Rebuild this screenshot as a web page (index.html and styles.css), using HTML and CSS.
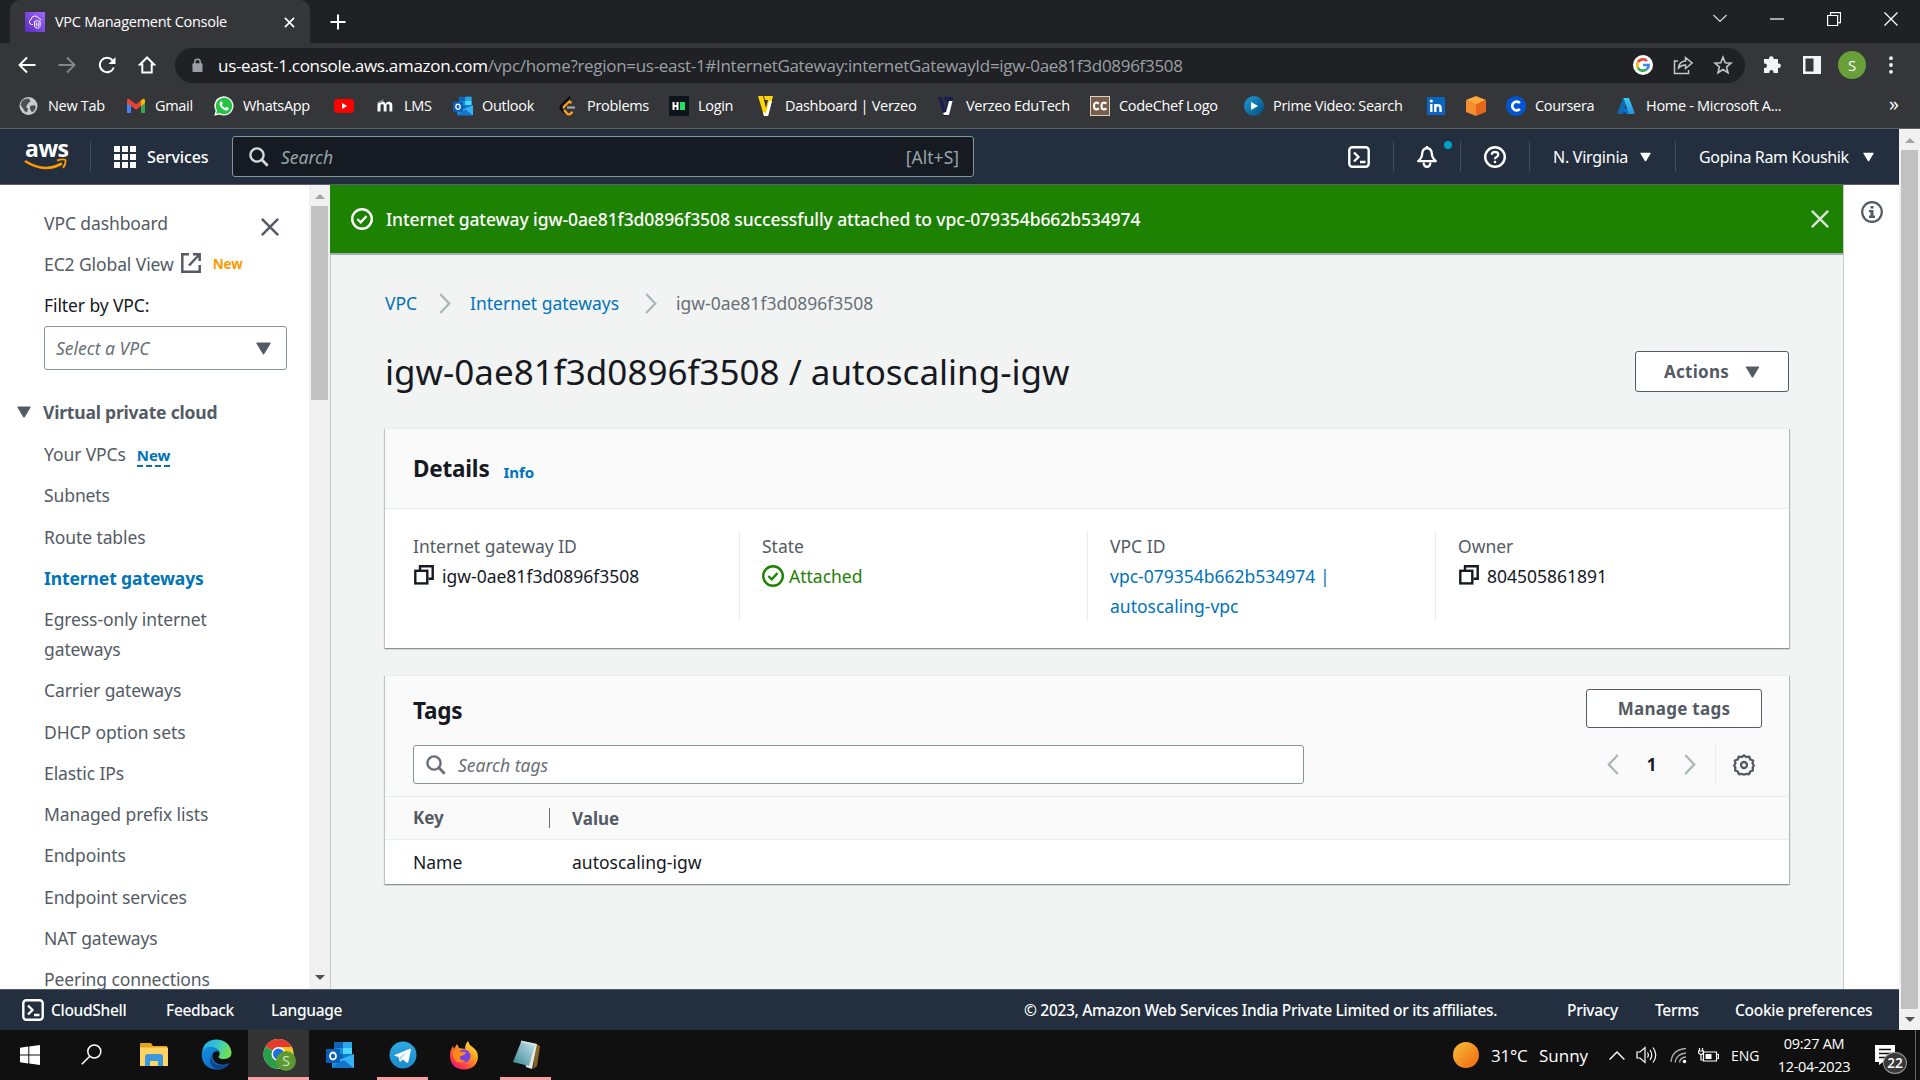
FILE: index.html
```html
<!DOCTYPE html>
<html lang="en">
<head>
<meta charset="utf-8">
<title>VPC Management Console</title>
<link rel="stylesheet" href="styles.css">
</head>
<body>
<svg class="defs" width="0" height="0">
  <defs>
    <linearGradient id="purple" x1="0" y1="1" x2="1" y2="0"><stop offset="0" stop-color="#5a2bc0"/><stop offset="1" stop-color="#a166ff"/></linearGradient>
    <linearGradient id="prime" x1="0" y1="0" x2="1" y2="1"><stop offset="0" stop-color="#1b9ddb"/><stop offset="1" stop-color="#064a78"/></linearGradient>
    <linearGradient id="azure" x1="0" y1="0" x2="0" y2="1"><stop offset="0" stop-color="#3ccbf4"/><stop offset="1" stop-color="#2892df"/></linearGradient>
    <linearGradient id="sun" x1="0" y1="0" x2="1" y2="1"><stop offset="0" stop-color="#f5c23a"/><stop offset="1" stop-color="#f2640f"/></linearGradient>
    <linearGradient id="edgeA" x1="0" y1="0" x2="1" y2="0.3"><stop offset="0" stop-color="#2aa8e8"/><stop offset="0.5" stop-color="#2ec3d8"/><stop offset="1" stop-color="#6fe05a"/></linearGradient>
    <linearGradient id="edgeB" x1="0" y1="0" x2="1" y2="1"><stop offset="0" stop-color="#1591e0"/><stop offset="1" stop-color="#0a5cb8"/></linearGradient>
    <linearGradient id="tele" x1="0" y1="0" x2="0" y2="1"><stop offset="0" stop-color="#2fa8e2"/><stop offset="1" stop-color="#1a8ccc"/></linearGradient>
    <linearGradient id="fox" x1="1" y1="0" x2="0.2" y2="1"><stop offset="0" stop-color="#fff04a"/><stop offset="0.45" stop-color="#ff9a1e"/><stop offset="0.8" stop-color="#ff3b48"/><stop offset="1" stop-color="#e31587"/></linearGradient>
    <linearGradient id="note" x1="0" y1="1" x2="1" y2="0"><stop offset="0" stop-color="#3b8795"/><stop offset="1" stop-color="#c3e4ec"/></linearGradient>
    <symbol id="i-close" viewBox="0 0 16 16"><path d="M1.5 1.5l13 13M14.5 1.5l-13 13" fill="none" stroke="currentColor" stroke-width="2"/></symbol>
    <symbol id="i-caret" viewBox="0 0 14 12"><path d="M1 0.5h12q1 0 .5 1L7.8 11q-.8 1-1.6 0L.5 1.500q-.5-1 .5-1z" fill="currentColor"/></symbol>
    <symbol id="i-search" viewBox="0 0 20 20"><circle cx="8" cy="8" r="6.6" fill="none" stroke="currentColor" stroke-width="2.4"/><path d="M12.600 12.600L18.700 18.700" stroke="currentColor" stroke-width="2.800"/></symbol>
    <symbol id="i-shell" viewBox="0 0 22 22"><rect x="1.300" y="1.300" width="19.400" height="19.400" rx="3" fill="none" stroke="currentColor" stroke-width="2.400"/><path d="M6 6.500l4.500 4.500L6 15.500M12 16h5.500" fill="none" stroke="currentColor" stroke-width="2.300"/></symbol>
    <symbol id="i-check" viewBox="0 0 22 22"><circle cx="11" cy="11" r="9.800" fill="none" stroke="currentColor" stroke-width="2.400"/><path d="M6.300 11l3.400 3.300 5.800-6.200" fill="none" stroke="currentColor" stroke-width="2.300"/></symbol>
    <symbol id="i-copy" viewBox="0 0 20 20"><path d="M6 5.500V1.300h12.700v12.400H14.500" fill="none" stroke="currentColor" stroke-width="2.400"/><rect x="1.300" y="5.800" width="12" height="12.600" fill="none" stroke="currentColor" stroke-width="2.400"/></symbol>
    <symbol id="i-right" viewBox="0 0 12 21"><path d="M1.200 1l9 9.500-9 9.500" fill="none" stroke="currentColor" stroke-width="2.300"/></symbol>
    <symbol id="i-left" viewBox="0 0 12 21"><path d="M10.800 1l-9 9.500 9 9.500" fill="none" stroke="currentColor" stroke-width="2.300"/></symbol>
    <symbol id="i-outlook" viewBox="0 0 28 28"><rect x="8" y="1" width="18" height="18" rx="1" fill="#1066b5"/><path d="M9 7h8v6H9z" fill="#1490df"/><path d="M17 1h9v6h-9z" fill="#28a8ea"/><path d="M17 7h9v6h-9z" fill="#50d9ff"/><path d="M17 13h9v6h-9z" fill="#0f7ad0"/><path d="M6 13l11 7 11-7v13q0 1-1 1H7q-1 0-1-1z" fill="#1e8fe0"/><path d="M28 13v14L13 19z" fill="#35b2f5"/><path d="M6 26.500L18 19l9.500 8H7z" fill="#1476c9"/><rect x="0" y="8" width="14" height="14" rx="1" fill="#0a5fb8"/><ellipse cx="7" cy="15" rx="3" ry="3.500" fill="none" stroke="#fff" stroke-width="1.800"/></symbol>
  </defs>
</svg>

<div class="screen">
  <div class="tabstrip">
    <div class="tab">
      <svg class="favicon" viewBox="0 0 20 20"><rect width="20" height="20" fill="url(#purple)"/><g fill="none" stroke="#fff" stroke-width="1"><path d="M8 12.500H6.500a2.600 2.600 0 0 1-.4-5 4 4 0 0 1 7.600-1.200q1.800.3 2.300 2"/><path d="M9.500 9.500q2.800-1.800 5.600 0v5q-2.800 3.500-5.600 0zM11.300 10.500v4M13.300 10.500v4"/></g></svg>
      <span class="tab-title">VPC Management Console</span>
      <svg class="tab-close" viewBox="0 0 12 12"><path d="M1 1l10 10M11 1L1 11" stroke="#fff" stroke-width="1.800"/></svg>
    </div>
    <svg class="new-tab" viewBox="0 0 16 16"><path d="M8 .5v15M.5 8h15" stroke="#fff" stroke-width="2"/></svg>
    <div class="window-buttons">
      <svg width="14" height="9" viewBox="0 0 14 9"><path d="M.5 1L7 7.500 13.500 1" fill="none" stroke="#ddd" stroke-width="1.200"/></svg>
      <svg width="14" height="14" viewBox="0 0 14 14"><path d="M0 7h14" stroke="#fff" stroke-width="1.200"/></svg>
      <svg width="14" height="14" viewBox="0 0 14 14"><path d="M.6 3.500h10v10H.6zM3.500 3V.6h10v10H11" fill="none" stroke="#fff" stroke-width="1.200"/></svg>
      <svg width="14" height="14" viewBox="0 0 14 14"><path d="M.5 .5l13 13M13.500 .5l-13 13" stroke="#fff" stroke-width="1.300"/></svg>
    </div>
  </div>

  <div class="toolbar">
    <div class="nav-buttons">
      <svg viewBox="0 0 18 18"><path d="M17.500 9H2M9 1.500L1.500 9 9 16.500" fill="none" stroke="#fff" stroke-width="1.900"/></svg>
      <svg class="dim" viewBox="0 0 18 18"><path d="M.5 9H16M9 1.500L16.500 9 9 16.500" fill="none" stroke="#85868a" stroke-width="1.900"/></svg>
      <svg viewBox="0 0 18 18"><path d="M15.800 11.500A7.200 7.200 0 1 1 14.500 4.300" fill="none" stroke="#fff" stroke-width="2"/><path d="M17.500 1v7h-7z" fill="#fff"/></svg>
      <svg viewBox="0 0 18 18"><path d="M9 1.500L2 8.500h2.300V16.500h9.400V8.500H16z" fill="none" stroke="#fff" stroke-width="2"/></svg>
    </div>
    <div class="omnibox">
      <svg class="lock" viewBox="0 0 12 15"><rect x="0.500" y="5" width="11" height="9.500" rx="1" fill="#9aa0a6"/><path d="M3 6V3.600a3 3 0 0 1 6 0V6" fill="none" stroke="#9aa0a6" stroke-width="1.600"/></svg>
      <span class="url"><span class="host">us-east-1.console.aws.amazon.com</span>/vpc/home?region=us-east-1#InternetGateway:internetGatewayId=igw-0ae81f3d0896f3508</span>
      <div class="omni-icons">
        <svg viewBox="0 0 20 20"><circle cx="10" cy="10" r="10" fill="#fff"/><g fill="none" stroke-width="2.600"><path d="M5 7.200a5.700 5.700 0 0 1 9-1.200" stroke="#ea4335"/><path d="M5 7.200a5.700 5.700 0 0 0 0 5.600" stroke="#fbbc05"/><path d="M5 12.800a5.700 5.700 0 0 0 8.700 1.500" stroke="#34a853"/><path d="M10 10h5.700q0 2.700-2 4.300" stroke="#4285f4"/></g></svg>
        <svg viewBox="0 0 20 20"><g fill="none" stroke="#c4c7c9" stroke-width="1.500"><path d="M5 6H1.500v12.500h14V15"/><path d="M5.500 13q.5-6.500 7-7V2.500L19 8l-6.500 5.500V10q-4.500 0-7 3z"/></g></svg>
        <svg viewBox="0 0 20 20"><path d="M10 2.200l2.200 5.500 5.900.4-4.500 3.800 1.400 5.800-5-3.200-5 3.200 1.400-5.800-4.500-3.800 5.900-.4z" fill="none" stroke="#c4c7c9" stroke-width="1.600"/></svg>
      </div>
    </div>
    <div class="ext-icons">
      <svg width="20" height="20" viewBox="0 0 20 20"><path d="M7 3.500a2.300 2.300 0 0 1 4.600 0V4H16v4.500h.6a2.300 2.300 0 0 1 0 4.600H16V18h-4.500v-.8a2.100 2.100 0 0 0-4.200 0v.8H2v-5h.8a2.200 2.200 0 0 0 0-4.400H2V4h5z" fill="#f1f3f4"/></svg>
      <svg width="18" height="18" viewBox="0 0 18 18"><path d="M0 0h18v18H0zM2.500 2.500v13h8v-13z" fill="#f1f3f4" fill-rule="evenodd"/></svg>
      <span class="avatar">S</span>
      <svg width="4" height="18" viewBox="0 0 4 18"><g fill="#f1f3f4"><circle cx="2" cy="2.200" r="1.900"/><circle cx="2" cy="9" r="1.900"/><circle cx="2" cy="15.800" r="1.900"/></g></svg>
    </div>
  </div>

  <div class="bookmarks">
    <div class="bm"><svg viewBox="0 0 20 20"><circle cx="9.500" cy="10" r="9" fill="#c9cbce"/><path d="M4 4q3-2 6-1.500l1.500 2.500-3 3-1.500 3 2 1.500-1 4q-3-1-4-4L1.500 9Q2 6 4 4zM11 10l4-1 2 2q-1 4-4 5.500L11 13z" fill="#4c4f53"/></svg><span>New Tab</span></div>
    <div class="bm"><svg viewBox="0 0 20 20"><path d="M1 17V4.500l4 3V17z" fill="#4285f4"/><path d="M15 17V7.500l4-3V17z" fill="#34a853"/><path d="M15 4.200L17 3q2-.6 2 1.500V7l-4 3z" fill="#fbbc04"/><path d="M1 7V4.500Q1 2.400 3 3l7 5.300L15 4.200V10l-5 3.800L5 10z" fill="#ea4335"/></svg><span>Gmail</span></div>
    <div class="bm"><svg viewBox="0 0 20 20"><path d="M.3 19.700l1.300-5A9.600 9.600 0 1 1 5.500 18.400z" fill="#fff"/><path d="M2.200 17.800l.9-3.400A8.200 8.200 0 1 1 5.800 17z" fill="#25c244"/><path d="M6.300 5.500l1.400-.2 1.100 2.500-.9 1.300q1 2 3.200 3l1.200-1.300 2.400 1.200-.2 1.400q-1.200 1.400-3 1Q7 13 5.600 8.800q-.3-2 .7-3.300z" fill="#fff"/></svg><span>WhatsApp</span></div>
    <div class="bm"><svg viewBox="0 0 20 20"><rect y="3" width="20" height="14" rx="3.500" fill="#f00"/><path d="M8 7l5.200 3L8 13z" fill="#fff"/></svg></div>
    <div class="bm"><svg viewBox="0 0 20 20"><path d="M2.500 15.500V9q0-3 3.200-2.500Q9 4 10.500 8q1-3 4-2.200 3 .6 2.800 3.500v6.200h-2.800V9.500q0-1.600-1.500-1.600t-1.500 1.600v6H8.700v-6q0-1.600-1.500-1.600T5.500 9.500v6z" fill="#fff"/><path d="M1 7l8-4-2 3.500z" fill="#8d9096"/></svg><span>LMS</span></div>
    <div class="bm"><svg viewBox="0 0 28 28"><use href="#i-outlook"/></svg><span>Outlook</span></div>
    <div class="bm"><svg viewBox="0 0 20 20"><path d="M12 1L3.500 9.500q-2 2 0 4l3 3" fill="none" stroke="#0b0b0b" stroke-width="2.300"/><path d="M13.500 7l-2-1.500L6.500 10q-1 1 0 2M6 14l3.500 4q1.500 1 3.500-.5l1.500-1.700" fill="none" stroke="#ffa116" stroke-width="2.300"/><path d="M9 11.500h8" stroke="#a7a7a7" stroke-width="2.200"/></svg><span>Problems</span></div>
    <div class="bm"><svg viewBox="0 0 20 20"><rect width="20" height="20" fill="#0e141e"/><path d="M4.500 6v8M8.500 6v8M4.500 10h4" stroke="#fff" stroke-width="2"/><rect x="11" y="6" width="5" height="8" fill="#1be361"/></svg><span>Login</span></div>
    <div class="bm"><svg viewBox="0 0 20 20"><path d="M2 0h5l3 12 2-8H9L8 0h9l-5 20H8z" fill="#ffd500"/><path d="M13 5h3l-4 15H8l-1-4 3 1z" fill="#fff"/></svg><span>Dashboard | Verzeo</span></div>
    <div class="bm"><svg viewBox="0 0 20 20"><path d="M1 1h4l3 12 2-8H8L7 1h9l-4 19H7z" fill="#191d51"/><path d="M12 5h3.500L12 19H7l-1-2 3-1z" fill="#fff"/></svg><span>Verzeo EduTech</span></div>
    <div class="bm"><svg viewBox="0 0 20 20"><rect x="0.500" y="0.500" width="19" height="19" fill="#7b5e4a" stroke="#d9cfc4"/><path d="M9 7.500Q4 5 4 10t5 2.500M16.500 7.500q-5-2.500-5 2.500t5 2.500" fill="none" stroke="#fff" stroke-width="2.200"/></svg><span>CodeChef Logo</span></div>
    <div class="bm"><svg viewBox="0 0 20 20"><circle cx="10" cy="10" r="10" fill="url(#prime)"/><path d="M7 6l7 4-7 4z" fill="#fff"/></svg><span>Prime Video: Search</span></div>
    <div class="bm"><svg viewBox="0 0 20 20"><rect x="0" y="1" width="18" height="18" rx="1" fill="#0a66c2"/><path d="M4.300 8v8M8.300 8v8M8.300 11.500q.4-2.300 2.700-2.200 2.500 0 2.500 2.700v4" fill="none" stroke="#fff" stroke-width="2.400"/><circle cx="4.300" cy="5" r="1.600" fill="#fff"/></svg></div>
    <div class="bm"><svg viewBox="0 0 20 20"><path d="M10 0l10 4-10 5L0 4z" fill="#ffa63e"/><path d="M0 4l10 4.500V20L0 16z" fill="#f68d2e"/><path d="M20 4L10 8.500V20l10-4z" fill="#e8651c"/></svg></div>
    <div class="bm"><svg viewBox="0 0 20 20"><circle cx="10" cy="10" r="10" fill="#0056d2"/><path d="M13.800 7.200a4.300 4.300 0 1 0 0 5.600" fill="none" stroke="#fff" stroke-width="2.700"/></svg><span>Coursera</span></div>
    <div class="bm"><svg viewBox="0 0 20 20"><path d="M6 2h5L6 18H1q-1 0-.6-1.300z" fill="#1468b0"/><path d="M3 12.500h9l3 5.500h-5z" fill="#0078d4"/><path d="M6.500 2h5.500l5.500 14.500q.4 1.500-1 1.500H12z" fill="url(#azure)"/></svg><span>Home - Microsoft A...</span></div>
    <div class="more">»</div>
  </div>

  <div class="viewport">
    <div class="page">
      <header class="aws-header">
        <div class="logo"><span class="logo-text">aws</span><svg viewBox="0 0 43 14"><path d="M1 3q19 12.500 37 2.500" fill="none" stroke="#f90" stroke-width="2.600"/><path d="M33 2.500q6-2 8.500-.5.500 4-2.500 8" fill="none" stroke="#f90" stroke-width="1.900"/></svg></div>
        <i class="hdiv"></i>
        <div class="services"><svg viewBox="0 0 22 22" fill="#fff"><path d="M0 0h6v6H0zM8 0h6v6H8zM16 0h6v6h-6zM0 8h6v6H0zM8 8h6v6H8zM16 8h6v6h-6zM0 16h6v6H0zM8 16h6v6H8zM16 16h6v6h-6z"/></svg><span>Services</span></div>
        <div class="global-search"><svg><use href="#i-search"/></svg><em>Search</em><span>[Alt+S]</span></div>
        <div class="hcell shell"><svg><use href="#i-shell"/></svg></div>
        <div class="hcell bell"><svg viewBox="0 0 22 22"><path d="M11 2q-4.500.5-4.800 5.500-.2 4.500-4 7.700h17.600q-3.800-3.200-4-7.700Q15.500 2.500 11 2z" fill="none" stroke="#fff" stroke-width="2.300" stroke-linejoin="round"/><path d="M7.500 16.500q.5 4.300 3.500 4.300t3.500-4.300" fill="none" stroke="#fff" stroke-width="2.200"/><path d="M11 0v3" stroke="#fff" stroke-width="2.200"/></svg><i class="dot"></i></div>
        <div class="hcell help"><svg viewBox="0 0 22 22"><circle cx="11" cy="11" r="9.800" fill="none" stroke="#fff" stroke-width="2.400"/><path d="M7.700 8.800q.2-3 3.300-3 3.300.1 3.300 2.800 0 1.500-1.800 2.400-1.500.7-1.500 2.200" fill="none" stroke="#fff" stroke-width="2.200"/><path d="M11 14.800v2.300" stroke="#fff" stroke-width="2.300"/></svg></div>
        <div class="hcell region"><span>N. Virginia</span><svg><use href="#i-caret"/></svg></div>
        <div class="hcell account"><span>Gopina Ram Koushik</span><svg><use href="#i-caret"/></svg></div>
      </header>

      <div class="body-row">
        <nav class="sidebar">
          <svg class="nav-close"><use href="#i-close"/></svg>
          <a>VPC dashboard</a>
          <a class="global-view"><span>EC2 Global View</span><svg viewBox="0 0 20 20"><path d="M8 1.300H1.300v17.400h17.400V12M12 1.300h6.700V8M18 2L8 12.500" fill="none" stroke="currentColor" stroke-width="2.500"/></svg><b>New</b></a>
          <a class="filter">Filter by VPC:</a>
          <div class="select"><em>Select a VPC</em><svg><use href="#i-caret"/></svg></div>
          <h3><svg><use href="#i-caret"/></svg>Virtual private cloud</h3>
          <a class="your">Your VPCs<b>New</b></a>
          <a>Subnets</a>
          <a>Route tables</a>
          <a class="current">Internet gateways</a>
          <a>Egress-only internet<br>gateways</a>
          <a>Carrier gateways</a>
          <a>DHCP option sets</a>
          <a>Elastic IPs</a>
          <a>Managed prefix lists</a>
          <a>Endpoints</a>
          <a>Endpoint services</a>
          <a>NAT gateways</a>
          <a>Peering connections</a>
        </nav>
        <div class="scrollbar side-scroll"><i class="up"></i><i class="thumb"></i><i class="down"></i></div>

        <main class="main">
          <div class="flash"><svg class="flash-ok"><use href="#i-check"/></svg><span>Internet gateway igw-0ae81f3d0896f3508 successfully attached to vpc-079354b662b534974</span><svg class="flash-x"><use href="#i-close"/></svg></div>
          <div class="content">
            <div class="crumbs"><a class="c1">VPC</a><svg><use href="#i-right"/></svg><a class="c2">Internet gateways</a><svg><use href="#i-right"/></svg><span>igw-0ae81f3d0896f3508</span></div>
            <div class="title-row"><h1>igw-0ae81f3d0896f3508 / autoscaling-igw</h1><button class="btn actions">Actions<svg><use href="#i-caret"/></svg></button></div>

            <section class="card details">
              <div class="card-head"><h2>Details</h2><b>Info</b></div>
              <div class="cols">
                <div class="col"><label>Internet gateway ID</label><p><svg class="copy"><use href="#i-copy"/></svg>igw-0ae81f3d0896f3508</p></div>
                <div class="col"><label>State</label><p class="ok"><svg><use href="#i-check"/></svg>Attached</p></div>
                <div class="col"><label>VPC ID</label><p class="link">vpc-079354b662b534974 |<br>autoscaling-vpc</p></div>
                <div class="col"><label>Owner</label><p class="num"><svg class="copy"><use href="#i-copy"/></svg>804505861891</p></div>
              </div>
            </section>

            <section class="card tags">
              <div class="tags-top"><h2>Tags</h2><button class="btn">Manage tags</button></div>
              <div class="tags-tools">
                <div class="tag-search"><svg><use href="#i-search"/></svg><em>Search tags</em></div>
                <div class="pager"><svg><use href="#i-left"/></svg><b>1</b><svg><use href="#i-right"/></svg></div>
                <div class="gear"><svg viewBox="0 0 22 22"><path d="M11 1.300l2.300 1.900 3-.5 1 2.800 2.800 1-.5 3 1.200 2-1.200 2.200.3 2.800-2.700 1-1.100 2.700-2.900-.4L11 20.700l-2.200-.9-2.900.4-1.100-2.700-2.700-1 .3-2.800L1.200 11.500l1.200-2-.5-3 2.800-1 1-2.800 3 .5z" fill="none" stroke="currentColor" stroke-width="2.300" stroke-linejoin="round"/><circle cx="11" cy="11" r="3" fill="none" stroke="currentColor" stroke-width="2.300"/></svg></div>
              </div>
              <div class="trow thead"><span>Key</span><span>Value</span></div>
              <div class="trow"><span>Name</span><span>autoscaling-igw</span></div>
            </section>
          </div>
        </main>
        <aside class="info-panel"><svg viewBox="0 0 22 22"><circle cx="11" cy="11" r="9.800" fill="none" stroke="currentColor" stroke-width="2.200"/><path d="M9.500 5h3v2.600h-3zM8 9h4.500v5.500H14V17H8v-2.500h1.500V11.300H8z" fill="currentColor"/></svg></aside>
      </div>

      <footer class="aws-footer">
        <svg><use href="#i-shell"/></svg>
        <span class="f-shell">CloudShell</span><span class="f-feed">Feedback</span><span class="f-lang">Language</span>
        <span class="f-copy">© 2023, Amazon Web Services India Private Limited or its affiliates.</span><span class="f-priv">Privacy</span><span class="f-terms">Terms</span><span class="f-cook">Cookie preferences</span>
      </footer>
    </div>
    <div class="scrollbar page-scroll"><i class="up"></i><i class="thumb"></i><i class="down"></i></div>
  </div>

  <div class="taskbar">
    <div class="task"><svg width="20" height="20" viewBox="0 0 20 20" fill="#fff"><path d="M0 2.800L8.300 1.600V9.600H0zM9.300 1.400L20 0v9.600H9.300zM0 10.500h8.300v8L0 17.300zM9.300 10.500H20V20L9.300 18.600z"/></svg></div>
    <div class="task"><svg width="21" height="21" viewBox="0 0 21 21"><circle cx="13.300" cy="7.500" r="6.500" fill="none" stroke="#fff" stroke-width="1.500"/><path d="M9 12L.8 20.300" stroke="#fff" stroke-width="1.500"/></svg></div>
    <div class="task"><svg width="29" height="24" viewBox="0 0 29 24"><path d="M0 1q0-1 1-1h10l2 3h14v4H0z" fill="#e6a21a"/><path d="M0 4.500h28V23H0z" fill="#ffd362"/><path d="M5 23v-9q0-3 3-3h12q3 0 3 3v9h-5v-5h-8v5z" fill="#3a98e0"/></svg></div>
    <div class="task"><svg width="31" height="31" viewBox="0 0 31 31"><path d="M1 14Q2 1 15.500.5 28 1 30.500 13q.5 7-7.500 7-5 0-5.500-2 3-5-1.500-8Q9 6 1 14z" fill="url(#edgeA)"/><path d="M.6 15Q2 8 9.500 7.700q6 0 8.500 5-5-1.500-6.500 3-.5 5 3.500 8.300 7 3.500 13.500 0-5 7.500-14 6.500Q1 29 .6 15z" fill="url(#edgeB)"/><path d="M11 15q-2 6 3 9.700 7 4 14 0 1-.5.300.6Q22 32.500 14 29.500 6 24 11 15z" fill="#12418d"/></svg></div>
    <div class="task active"><svg width="34" height="32" viewBox="0 0 34 32"><circle cx="15.500" cy="15" r="15" fill="#fff"/><path d="M15.500 15L2.500 7.500A15 15 0 0 1 28.500 7.500z" fill="#e33b2e"/><path d="M15.500 15L2.500 7.500A15 15 0 0 0 15.500 30l6-12z" fill="#2a9f4b"/><path d="M15.500 8h13A15 15 0 0 1 15.500 30l6.500-11z" fill="#fcc31e"/><circle cx="15.500" cy="15" r="7" fill="#fff"/><circle cx="15.500" cy="15" r="5.500" fill="#1f6fe5"/><circle cx="23" cy="22" r="10" fill="#5b9a32"/><text x="23" y="27" text-anchor="middle" class="chrome-s">S</text></svg></div>
    <div class="task"><svg width="30" height="28" viewBox="0 0 28 28"><use href="#i-outlook"/></svg></div>
    <div class="task open"><svg width="28" height="28" viewBox="0 0 28 28"><circle cx="14" cy="14" r="13.500" fill="url(#tele)"/><path d="M5.500 14L21 7.700q1.200-.3.900 1.300l-2.600 12q-.4 1.300-1.700.5l-4-3-2 2q-1 .7-1.200-.5l-.9-4-3.800-1.200q-1-.5-.2-.8z" fill="#fff"/><path d="M10.500 16l7.500-5-5.500 6-1.500 3z" fill="#aed5ea"/></svg></div>
    <div class="task"><svg width="30" height="30" viewBox="0 0 30 30"><path d="M19 1q1 4 4.500 6 5.500 4 5.500 10-1 12-14 12.500Q2 29 1 16.500 1 10 4 6l1 3 3-5 2 4 6 1q0-5 3-8z" fill="url(#fox)"/><circle cx="15" cy="16" r="6.500" fill="#7542e5"/><path d="M4 11q5-2 7 1 5-1 6 1-2 3-6 3.500-1 4 6 4.500-8 4-12-2Q3 15 4 11z" fill="#ff8a1c"/></svg></div>
    <div class="task open"><svg width="28" height="30" viewBox="0 0 28 30"><path d="M24 4l4 2-3 20-4 3z" fill="#8a6424"/><path d="M10 1L25 4l-5 25-6-2z" fill="#e8e9e4"/><path d="M9 2l14 3-6 21L1 22z" fill="url(#note)"/><path d="M9 1.500L23 4.500" stroke="#dfe5e6" stroke-width="2" stroke-dasharray="1.500 1"/></svg></div>
    <div class="tray">
      <svg class="sun" viewBox="0 0 26 26"><circle cx="13" cy="13" r="13" fill="url(#sun)"/></svg>
      <span class="temp">31°C</span><span class="sky">Sunny</span>
      <svg class="t-up" viewBox="0 0 16 9"><path d="M.6 8.400L8 1l7.400 7.400" fill="none" stroke="#fff" stroke-width="1.400"/></svg>
      <svg class="t-vol" viewBox="0 0 21 18"><g fill="none" stroke="#fff" stroke-width="1.200"><path d="M1 6h3l5-4.500v15L4 12H1z"/><path d="M11.500 6.500q1.700 2.500 0 5M14 4q3.500 5 0 10M17 1.500q5.500 7.500 0 15"/></g></svg>
      <svg class="t-net" viewBox="0 0 17 17"><g fill="none" stroke="#aaa" stroke-width="1.300"><path d="M1 15Q2 2.500 16 1.500M5 15.500Q6 7 16 6M9.500 15.500q.5-5 6.500-5.500"/></g><circle cx="14.500" cy="14.500" r="1.800" fill="#fff"/></svg>
      <svg class="t-bat" viewBox="0 0 21 15"><path d="M5.500 4h13v9h-13zM19 6.500h1.500v4H19" fill="none" stroke="#fff" stroke-width="1.200"/><path d="M7.500 6h6v5h-6z" fill="#fff"/><path d="M1.500 0v3M4.500 0v3M.5 3h5v2L3 7 .5 5zM3 7v5h2" fill="none" stroke="#fff" stroke-width="1.200"/></svg>
      <span class="lang">ENG</span>
      <div class="clock"><span>09:27 AM</span><span class="date">12-04-2023</span></div>
      <div class="notif"><svg viewBox="0 0 20 20"><path d="M0 0h20v17H8l-4 3v-3H0z" fill="#fff"/><path d="M4 4.500h12M4 8.500h12M4 12.500h8" stroke="#111" stroke-width="1.300"/></svg><i class="badge">22</i></div>
      <i class="peek"></i>
    </div>
  </div>
</div>
</body>
</html>
```
FILE: styles.css
```css
* { box-sizing: border-box; }
body { margin: 0; width: 1920px; height: 1080px; overflow: hidden; background: #202124; font-family: "Noto Sans", "Open Sans", sans-serif; }
h1, h2, h3, p { margin: 0; }
i { display: block; font-style: normal; }
svg { display: block; flex: none; }
span, a, em, b, label { white-space: nowrap; }
.defs { position: absolute; }
.screen { display: flex; flex-direction: column; width: 1920px; height: 1080px; }

/* browser chrome */
.tabstrip { display: flex; align-items: center; height: 43px; background: #202124; color: #fff; font-family: "Open Sans", sans-serif; }
.tab { display: flex; align-items: center; width: 300px; height: 43px; margin-left: 10px; padding-left: 15px; background: #35363a; border-radius: 10px 10px 0 0; }
.favicon { width: 20px; height: 20px; }
.tab-title { width: 229px; margin-left: 10px; font-size: 14.500px; letter-spacing: -0.270px; }
.tab-close { width: 11px; height: 11px; margin-top: 1px; }
.new-tab { width: 16px; height: 16px; margin-left: 20px; }
.window-buttons { display: flex; align-items: center; gap: 43px; margin-left: auto; margin-right: 22px; padding-bottom: 6px; }
.toolbar { display: flex; align-items: center; height: 44px; background: #35363a; font-family: "Open Sans", sans-serif; }
.nav-buttons { display: flex; gap: 22px; width: 175px; padding-left: 18px; }
.nav-buttons svg { width: 18px; height: 18px; }
.omnibox { display: flex; align-items: center; width: 1570px; height: 35px; padding-left: 17px; background: #202124; border-radius: 18px; }
.lock { width: 11px; height: 15px; }
.url { width: 1127px; margin-left: 15px; color: #9aa0a6; font-size: 17px; letter-spacing: -0.300px; }
.host { color: #fff; }
.omni-icons { display: flex; gap: 20px; margin-left: 288px; }
.omnibox .url { width: 1127px; }
.omni-icons svg { width: 20px; height: 20px; }
.ext-icons { display: flex; align-items: center; margin-left: 17px; }
.ext-icons svg + svg { margin-left: 21px; }
.avatar { display: flex; align-items: center; justify-content: center; width: 28px; height: 28px; margin: 0 23px 0 17px; border-radius: 50%; background: #689f38; color: #fff; font-size: 15px; }
.bookmarks { display: grid; grid-template-columns: 107px 88px 120px 41px 78px 105px 111px 87px 181px 153px 154px 183px 39px 40px 111px 272px 20px; align-items: center; height: 42px; padding-left: 19px; padding-bottom: 4px; background: #35363a; border-bottom: 1px solid #5f6368; color: #fff; font-family: "Open Sans", sans-serif; font-size: 14.500px; letter-spacing: -0.300px; }
.bm { display: flex; align-items: center; gap: 9px; }
.bm svg { width: 20px; height: 20px; }
.more { font-size: 20px; line-height: 20px; padding-bottom: 4px; }

/* scrollbars */
.scrollbar { display: flex; flex-direction: column; align-items: center; background: #f1f1f1; }
.scrollbar .thumb { width: 17px; background: #c1c1c1; }
.scrollbar .up { border: 5px solid transparent; border-top-width: 0; border-bottom: 5px solid #a3a3a3; }
.scrollbar .down { margin-top: auto; border: 5px solid transparent; border-bottom-width: 0; border-top: 5px solid #505050; }
.page-scroll { width: 21px; padding: 9px 0 8px; }
.page-scroll .thumb { height: 859px; margin-top: 7px; }
.side-scroll { width: 21px; padding: 9px 0 9px; }
.side-scroll .thumb { height: 194px; margin-top: 7px; }

.viewport { display: flex; height: 901px; }
.page { display: flex; flex-direction: column; width: 1899px; }

/* console header */
.aws-header { display: flex; align-items: center; height: 56px; background: #232f3e; border-bottom: 1px solid #5a6069; color: #fff; font-size: 16px; }
.logo { display: flex; flex-direction: column; width: 43px; margin-left: 24px; }
.logo-text { height: 18px; padding-left: 1px; font: bold 23px/15px "Open Sans", sans-serif; letter-spacing: -0.500px; }
.logo svg { width: 43px; height: 14px; margin-top: -1px; }
.hdiv { width: 1px; height: 31px; margin-left: 23px; background: #414d5c; }
.services { display: flex; align-items: center; gap: 11px; width: 118px; margin-left: 23px; }
.services svg { width: 22px; height: 22px; }
.services span { letter-spacing: -0.100px; font-weight: 500; }
.global-search { display: flex; align-items: center; width: 742px; height: 41px; padding: 0 14px 0 16px; background: #161a22; border: 1px solid #879596; border-radius: 3px; color: #95a5a6; font-size: 17.500px; }
.global-search svg { width: 20px; height: 20px; margin-right: 12px; color: #d5dbdb; }
.global-search span { margin-left: auto; }
.hcell { display: flex; align-items: center; height: 31px; border-right: 1px solid #414d5c; }
.hcell svg { width: 22px; height: 22px; }
.shell { width: 420px; padding-left: 374px; }
.bell { position: relative; width: 67px; padding-left: 22px; }
.dot { position: absolute; left: 50px; top: 0; width: 8px; height: 8px; border-radius: 50%; background: #00a1c9; }
.help { width: 69px; padding-left: 23px; }
.region { width: 146px; padding-left: 23px; }
.account { padding-left: 23px; border: 0; }
.region span { width: 87px; letter-spacing: -0.250px; }
.account span { width: 164px; letter-spacing: -0.350px; }
.region svg, .account svg { width: 11px; height: 10px; }

/* sidebar */
.body-row { display: flex; height: 804px; overflow: hidden; background: #f2f3f3; }
.sidebar { position: relative; display: flex; flex-direction: column; width: 309px; padding: 22.500px 0 0 44px; background: #fff; color: #545b64; font-size: 17.500px; line-height: 30px; overflow: hidden; }
.sidebar a { flex: none; margin-bottom: 11.250px; letter-spacing: -0.100px; }
.nav-close { position: absolute; left: 260px; top: 32px; width: 20px; height: 20px; }
.global-view { display: flex; align-items: center; }
.global-view svg { width: 20px; height: 20px; margin: 0 12px 2px 7px; }
.sidebar b { font-size: 13.500px; color: #ff9900; }
.sidebar .filter { margin-bottom: 6px; color: #16191f; }
.select { display: flex; flex: none; align-items: center; justify-content: space-between; width: 243px; height: 44px; padding: 0 15px 0 11px; border: 1px solid #879596; border-radius: 3px; color: #687078; }
.select svg { width: 15px; height: 13px; color: #545b64; }
.sidebar h3 { display: flex; flex: none; align-items: center; margin: 27px 0 12px -27px; font-size: 17.500px; line-height: 30px; letter-spacing: -0.200px; }
.sidebar h3 svg { width: 14px; height: 12px; margin-right: 12px; }
.sidebar .your { height: 30px; }
.your b { display: inline-block; height: 27px; margin-left: 11px; border-bottom: 2px dashed #0073bb; color: #0073bb; font-size: 15px; }
.sidebar .current { color: #0073bb; font-weight: bold; }

/* main column */
.main { display: flex; flex-direction: column; width: 1514px; border-right: 1px solid #c5cacc; }
.flash { display: flex; flex: none; align-items: center; height: 70px; padding-left: 21px; background: #1d8102; border-bottom: 2px solid #a5adb0; color: #fff; font-size: 17.500px; font-weight: 500; }
.flash span { width: 1424px; margin-left: 13px; letter-spacing: -0.100px; }
.flash-ok { width: 22px; height: 22px; }
.flash-x { width: 20px; height: 20px; color: #d9e3d3; }
.content { display: flex; flex-direction: column; flex: 1; padding: 33px 54px 0 54px; border-left: 1px solid #c5cacc; }
.crumbs { display: flex; align-items: center; height: 30px; font-size: 17.500px; color: #687078; }
.crumbs a { color: #0073bb; }
.crumbs svg { width: 12px; height: 25px; color: #aab7b8; margin-right: 19px; }
.c1 { width: 54px; }
.c2 { width: 175px; }
.title-row { display: flex; align-items: center; justify-content: space-between; height: 41px; margin-top: 33px; }
h1 { color: #16191f; font-size: 35px; font-weight: 400; letter-spacing: 0; white-space: nowrap; }
.btn { display: flex; align-items: center; justify-content: center; padding: 0; background: #fff; border: 1px solid #545b64; border-radius: 3px; color: #545b64; font: bold 17px "Noto Sans", sans-serif; letter-spacing: 0.250px; }
.actions { width: 154px; height: 41px; }
.actions svg { width: 15px; height: 12px; margin-left: 16px; }
.card { background: #fff; border-top: 1px solid #eaeded; box-shadow: 0 1px 1px #879596, 1px 1px 1px #b7bfc0, -1px 1px 1px #c9cfcf; }
.details { height: 220px; margin-top: 36px; }
.card-head { display: flex; align-items: center; height: 80px; padding-left: 28px; background: #fafafa; border-bottom: 1px solid #eaeded; }
h2 { color: #16191f; font-size: 22.500px; line-height: 30px; letter-spacing: -0.200px; }
.card-head b { margin: 6px 0 0 14px; color: #0073bb; font-size: 15px; }
.cols { display: grid; grid-template-columns: 355px 348px 348px 353px; height: 90px; margin-top: 22px; color: #16191f; font-size: 17.500px; line-height: 30px; }
.col { padding-left: 22px; border-right: 1px solid #eaeded; }
.col:first-child { padding-left: 28px; }
.col:last-child { border: 0; }
.col label { display: block; color: #545b64; }
.col p { display: flex; align-items: center; white-space: nowrap; }
.col .link { display: block; color: #0073bb; }
.col .copy { width: 20px; height: 20px; margin: 0 8px 2px 1px; }
.col .ok { color: #1d8102; }
.ok svg { width: 22px; height: 22px; margin-right: 5px; }
.tags { margin-top: 27px; }
.tags-top { display: flex; justify-content: space-between; height: 69px; padding: 13px 27px 0 28px; background: #fafafa; }
.tags-top h2 { margin-top: 7px; }
.tags-top .btn { width: 176px; height: 39px; }
.tags-tools { display: flex; height: 52px; padding-left: 28px; background: #fafafa; border-bottom: 1px solid #eaeded; }
.tag-search { display: flex; align-items: center; width: 891px; height: 39px; padding-left: 12px; background: #fff; border: 1px solid #879596; border-radius: 3px; color: #687078; font-size: 17.500px; }
.tag-search svg { width: 20px; height: 20px; margin-right: 12px; }
.pager { display: flex; align-items: center; width: 412px; height: 39px; padding-left: 303px; border-right: 1px solid #eaeded; color: #16191f; font-size: 17px; }
.pager svg { width: 12px; height: 21px; color: #aab7b8; }
.pager b { width: 65px; text-align: center; }
.gear { display: flex; align-items: center; height: 39px; padding-left: 17px; color: #545b64; }
.gear svg { width: 22px; height: 22px; }
.trow { display: flex; align-items: center; height: 44px; padding-left: 28px; color: #16191f; font-size: 17.500px; }
.trow span:first-child { width: 159px; }
.thead { height: 43px; background: #fafafa; border-bottom: 1px solid #eaeded; color: #545b64; font-weight: bold; font-size: 17px; }
.thead span:first-child { display: block; width: 137px; height: 20px; line-height: 20px; margin-right: 22px; border-right: 1px solid #687078; }
.info-panel { width: 55px; padding: 16px 0 0 17px; background: #fff; color: #545b64; }
.info-panel svg { width: 22px; height: 22px; }

.aws-footer { display: flex; align-items: center; height: 41px; padding-left: 22px; background: #232f3e; border-top: 1px solid #545b64; color: #fff; font-size: 15.500px; font-weight: 500; }
.aws-footer svg { width: 22px; height: 22px; margin-right: 7px; }
.aws-footer span { letter-spacing: -0.300px; }
.f-shell { width: 115px; }
.f-feed { width: 105px; }
.f-lang { width: 753px; }
.f-copy { width: 543px; }
.f-priv { width: 88px; }
.f-terms { width: 80px; }

/* taskbar */
.taskbar { display: flex; height: 50px; background: #101010; color: #fff; font-family: "Open Sans", sans-serif; }
.task { display: flex; align-items: center; justify-content: center; width: 62px; border-bottom: 3px solid transparent; padding-top: 2px; }
.task:first-child { width: 60px; }
.task:nth-child(2) { width: 63px; }
.task:nth-child(4) { width: 63px; }
.active { background: #333; border-color: #f8a0a4; width: 61px; }
.active svg { margin-left: 2px; }
.open { width: 51px; margin: 0 6px; border-color: #f8a0a4; }
.task:nth-child(8) { width: 60px; }
.chrome-s { fill: #d7e6c9; font: 14px "Open Sans", sans-serif; }
.tray { display: flex; align-items: center; flex: 1; font-size: 17px; }
.tray .sun { width: 26px; height: 26px; margin-left: auto; }
.temp { width: 48px; margin-left: 12px; letter-spacing: -0.200px; }
.sky { width: 70px; }
.t-up { width: 16px; height: 9px; }
.t-vol { width: 21px; height: 18px; margin-left: 11px; }
.t-net { width: 17px; height: 17px; margin-left: 13px; }
.t-bat { width: 21px; height: 15px; margin-left: 11px; }
.lang { width: 28px; margin-left: 12px; font-size: 14px; }
.clock { display: flex; flex-direction: column; align-items: center; width: 110px; font-size: 14.500px; line-height: 23px; letter-spacing: -0.300px; }
.notif { position: relative; width: 46px; padding-left: 6px; }
.notif svg { width: 20px; height: 20px; }
.badge { position: absolute; left: 14px; top: 7px; width: 24px; height: 22px; border: 1px solid #999; border-radius: 50%; background: #3a3a3a; font-size: 13.500px; font-weight: 600; line-height: 20px; text-align: center; }
.peek { width: 1px; height: 50px; margin-right: 4px; background: #666; }
```
